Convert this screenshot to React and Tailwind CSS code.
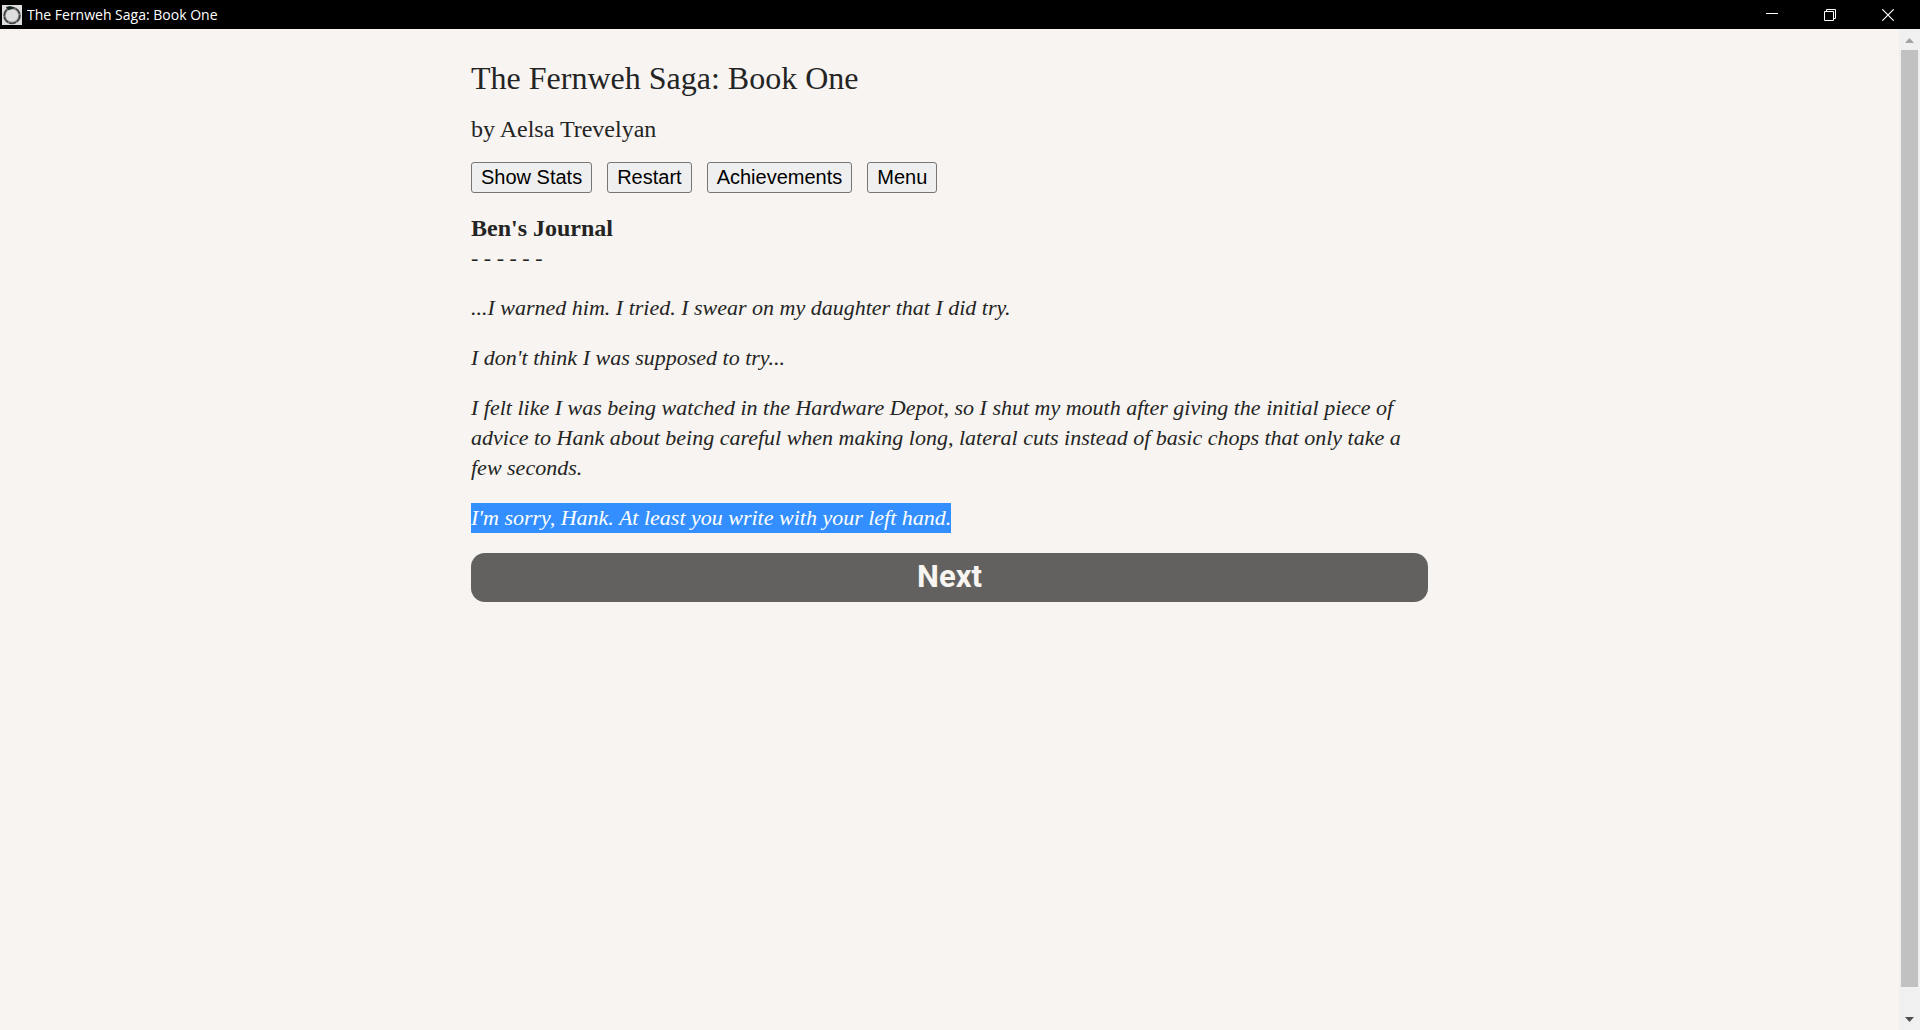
import React from 'react';

const entries = [
  "...I warned him. I tried. I swear on my daughter that I did try.",
  "I don't think I was supposed to try...",
  "I felt like I was being watched in the Hardware Depot, so I shut my mouth after giving the initial piece of advice to Hank about being careful when making long, lateral cuts instead of basic chops that only take a few seconds.",
];

const toolbar = ['Show Stats', 'Restart', 'Achievements', 'Menu'];

const TitleBar = () => (
  <header className="flex h-[29px] shrink-0 items-center bg-black text-white">
    <svg className="ml-0.5 size-5" viewBox="0 0 20 20" fill="none" aria-hidden="true">
      <rect width="20" height="20" fill="#dedede" />
      <circle cx="10" cy="10.5" r="7.6" stroke="#8f8f8f" strokeWidth="2.8" />
      <circle cx="10" cy="10.5" r="7.8" stroke="#3c3c3c" strokeWidth="1.3" strokeDasharray="7 1" />
      <path d="M4 2l4-1 3 1 2 1-3 1-3 1-2-1z" fill="#142a1e" />
    </svg>
    <span className="ml-[5px] font-['Open_Sans',sans-serif] text-[14px] leading-5">The Fernweh Saga: Book One</span>
    <div className="mr-[3px] ml-auto flex h-full">
      <button type="button" aria-label="Minimize" className="flex w-[58px] items-center justify-center">
        <svg className="size-3" viewBox="0 0 12 12" stroke="#fff" aria-hidden="true">
          <path d="M0 4.5h12" />
        </svg>
      </button>
      <button type="button" aria-label="Restore" className="flex w-[58px] items-center justify-center">
        <svg className="size-3" viewBox="0 0 12 12" fill="none" stroke="#fff" aria-hidden="true">
          <path d="M.5 2.5h9v9h-9zM2.5 2.5v-2h9v9h-2" />
        </svg>
      </button>
      <button type="button" aria-label="Close" className="flex w-[58px] items-center justify-center">
        <svg className="size-3" viewBox="0 0 12 12" stroke="#fff" strokeWidth="1.2" aria-hidden="true">
          <path d="M.3.3l11.4 11.4M11.7.3L.3 11.7" />
        </svg>
      </button>
    </div>
  </header>
);

const ScrollBar = () => (
  <div className="flex w-[21px] shrink-0 flex-col bg-[#f0f0f0]">
    <button type="button" aria-label="Scroll up" className="flex h-[21px] items-center justify-center pt-0.5">
      <svg className="h-[5px] w-[9px]" viewBox="0 0 9 5" fill="#a3a3a3" aria-hidden="true">
        <path d="M0 5L4.5 0L9 5z" />
      </svg>
    </button>
    <div className="flex grow flex-col px-0.5">
      <div className="h-[97.7%] bg-[#c1c1c1]" />
    </div>
    <button type="button" aria-label="Scroll down" className="flex h-[21px] items-center justify-center">
      <svg className="h-[5px] w-[9px]" viewBox="0 0 9 5" fill="#505050" aria-hidden="true">
        <path d="M0 0L4.5 5L9 0z" />
      </svg>
    </button>
  </div>
);

const App = () => {
  return (
    <div className="flex h-screen flex-col bg-[#f7f4f1]">
      <TitleBar />
      <div className="flex min-h-0 grow">
        <main className="grow overflow-hidden font-['Liberation_Serif',serif] text-[22px] leading-[30px] text-[#242424]">
          <div className="mx-auto max-w-[957px] pt-[29px]">
            <h1 className="text-[32px] leading-10">The Fernweh Saga: Book One</h1>
            <h2 className="mt-4 text-[24px] leading-[30px]">by Aelsa Trevelyan</h2>
            <div className="mt-[18px] flex flex-wrap gap-[15px] font-['Liberation_Sans',sans-serif] text-[20px] leading-[23px] text-black">
              {toolbar.map((label) => (
                <button key={label} type="button" className="rounded-[3px] border border-[#767676] bg-[#efefef] px-[9px] py-[3px]">
                  {label}
                </button>
              ))}
            </div>
            <h3 className="mt-5 text-[24px] leading-[30px] font-bold">Ben's Journal</h3>
            <p>- - - - - -</p>
            {entries.map((text) => (
              <p key={text} className="mt-5 italic">{text}</p>
            ))}
            <p className="mt-5 flex italic">
              <mark className="bg-[#338fff] text-white">I'm sorry, Hank. At least you write with your left hand.</mark>
            </p>
            <button
              type="button"
              className="mt-5 h-[49px] w-full rounded-[14px] bg-[#62615f] pb-0.5 font-[Roboto,sans-serif] text-[31px] font-bold text-[#f7f4f1]"
            >
              Next
            </button>
          </div>
        </main>
        <ScrollBar />
      </div>
    </div>
  );
};

export default App;
